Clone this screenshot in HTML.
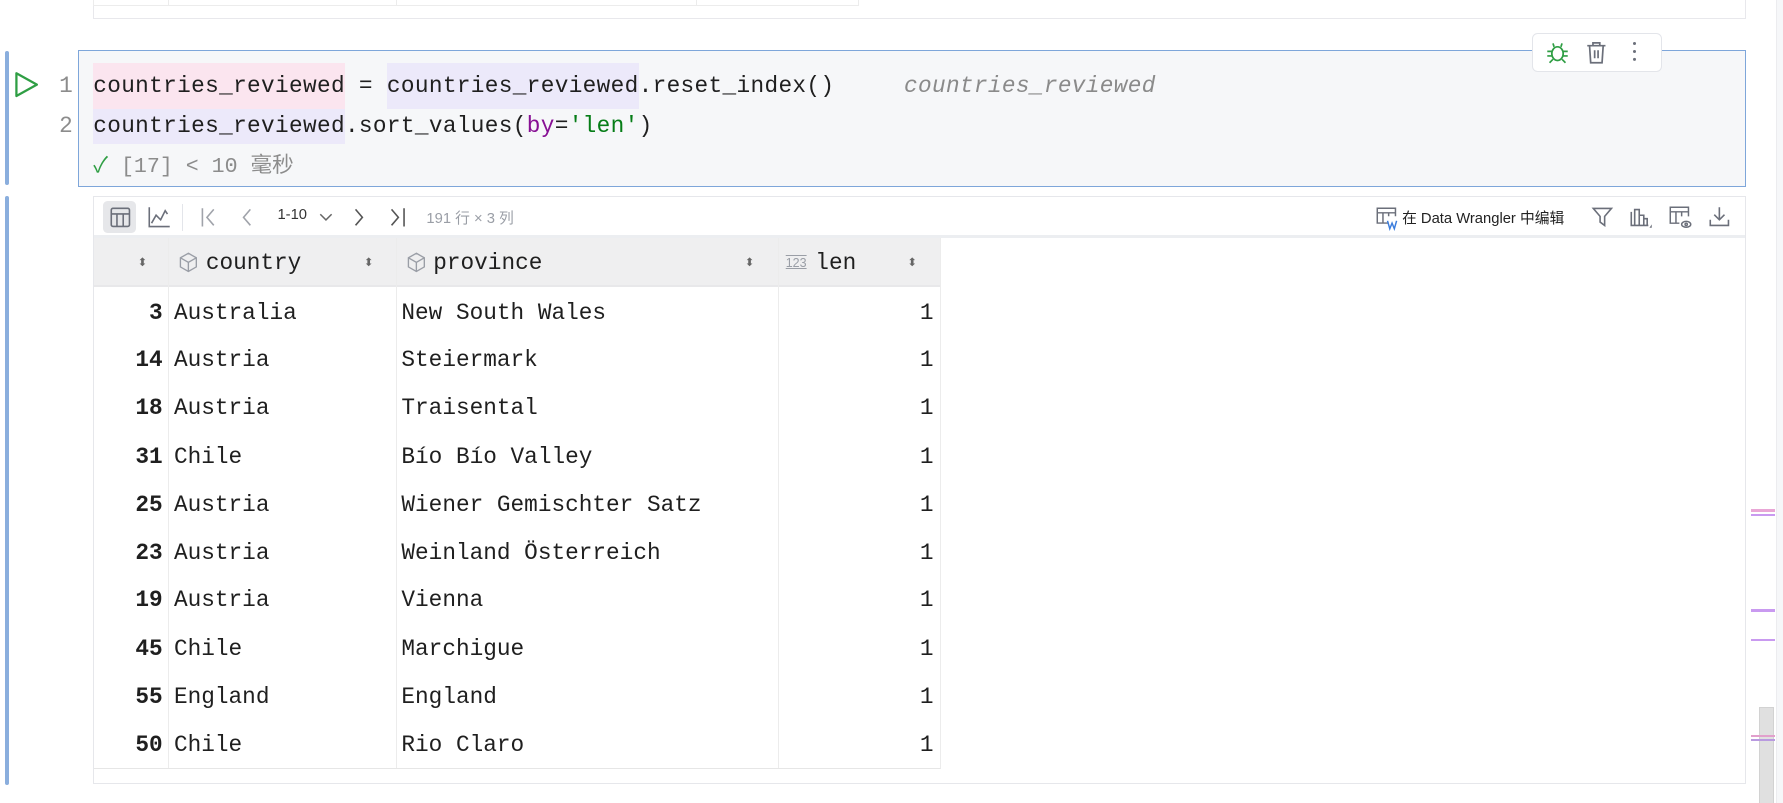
<!DOCTYPE html>
<html><head><meta charset="utf-8"><style>
html,body{margin:0;padding:0;background:#fff;overflow:hidden}
#w{position:relative;width:1568px;height:706px;zoom:1.13712;font-family:"Liberation Mono","Noto Sans CJK SC",monospace;color:#1f1f1f}
.a{position:absolute}
.code{font-size:20px;white-space:pre;line-height:30px}
.ui{font-family:"Liberation Sans","Noto Sans CJK SC",sans-serif}
.row{position:absolute;left:0;width:744px;height:42px;font-size:20px;line-height:44px}
.row span{position:absolute;top:0}
.vl{position:absolute;top:0;bottom:0;width:1px;background:#ececec}
svg{position:absolute}
</style></head><body><div id="w">
<div class="a" style="left:82px;top:-2px;width:1452px;height:18px;border:1px solid #e8e8ec;border-top:none"></div>
<div class="a" style="left:82px;top:-2px;width:672px;height:6px;border:1px solid #ececec;border-top:none"></div>
<div class="a" style="left:148px;top:0;width:1px;height:4px;background:#ececec"></div>
<div class="a" style="left:348px;top:0;width:1px;height:4px;background:#ececec"></div>
<div class="a" style="left:612px;top:0;width:1px;height:4px;background:#ececec"></div>

<div class="a" style="left:4px;top:45px;width:4px;height:118px;background:#8aaedd;border-radius:2px"></div>
<div class="a" style="left:4px;top:172px;width:4px;height:518px;background:#8aaedd;border-radius:2px"></div>
<svg style="left:11px;top:62px" width="24" height="24" viewBox="0 0 24 24"><path d="M3 2 L21 12 L3 22 Z" fill="none" stroke="#2f9e44" stroke-width="2" stroke-linejoin="round"/></svg>
<div class="a code" style="left:52px;top:61px;color:#8c8c8c">1</div>
<div class="a code" style="left:52px;top:96px;color:#8c8c8c">2</div>

<div class="a" style="left:69px;top:44px;width:1465px;height:119px;border:1px solid #7ea6da;background:#f6f7f9"></div>
<div class="a" style="left:82px;top:55px;width:221px;height:41px;background:#fbe5ef"></div>
<div class="a" style="left:340px;top:55px;width:222px;height:41px;background:#ece9fa"></div>
<div class="a" style="left:82px;top:96px;width:221px;height:31px;background:#ece9fa"></div>
<div class="a code" style="left:82px;top:61px;letter-spacing:0.3px">countries_reviewed = countries_reviewed.reset_index()</div>
<div class="a code" style="left:795px;top:61px;color:#8a8a8a;font-style:italic;letter-spacing:0.3px">countries_reviewed</div>
<div class="a code" style="left:82px;top:96px;letter-spacing:0.3px">countries_reviewed.sort_values(<span style="color:#871094">by</span>=<span style="color:#067d17">'len'</span>)</div>
<div class="a code" style="left:82px;top:132px;font-size:19px;color:#8c8c8c"><span style="color:#2f9e44">✓</span> [17] &lt; 10 毫秒</div>

<div class="a" style="left:1347px;top:29px;width:113px;height:33px;background:#fff;border:1px solid #e3e5ea;border-radius:5px"></div>
<svg style="left:1359px;top:35px" width="22" height="22" viewBox="0 0 22 22" fill="none" stroke="#2f9e44" stroke-width="1.5"><ellipse cx="11" cy="12" rx="5" ry="6"/><path d="M8 6 L7 3 M14 6 L15 3 M6 10 H2 M16 10 H20 M6 14 H2 M16 14 H20 M7 17 L4 20 M15 17 L18 20"/></svg>
<svg style="left:1394px;top:35px" width="20" height="22" viewBox="0 0 20 22" fill="none" stroke="#6b6f7a" stroke-width="1.5"><path d="M2 5 H18 M7 5 V2.5 H13 V5 M4 5 L5 20 H15 L16 5 M8.5 9 V16 M11.5 9 V16"/></svg>
<div class="a" style="left:1436px;top:37px;width:3px;height:3px;border-radius:2px;background:#6b6f7a;box-shadow:0 7px 0 #6b6f7a,0 14px 0 #6b6f7a"></div>

<div class="a" style="left:82px;top:172px;width:1452px;height:516px;border:1px solid #e6e7eb;background:#fff"></div>
<div class="a" style="left:83px;top:207px;width:1452px;height:2px;background:#eceef1"></div>
<div class="a" style="left:91px;top:177px;width:29px;height:28px;background:#e6e7ea;border-radius:4px"></div>
<svg style="left:96px;top:181px" width="20" height="20" viewBox="0 0 20 20" fill="none" stroke="#6b6f7a" stroke-width="1.4"><rect x="2" y="2" width="16" height="16" rx="1.5"/><path d="M2 7 H18 M7 7 V18 M12.5 7 V18"/></svg>
<svg style="left:129px;top:180px" width="22" height="22" viewBox="0 0 22 22" fill="none" stroke="#6b6f7a" stroke-width="1.4"><path d="M2 2 V19 H20 M4 16 L8 9 L12 13 L16 5 L18 8"/></svg>
<div class="a" style="left:160px;top:179px;width:1px;height:24px;background:#e3e5ea"></div>
<svg style="left:175px;top:181px" width="18" height="20" viewBox="0 0 18 20" fill="none" stroke="#a0a3aa" stroke-width="1.4"><path d="M3 2 V18 M13 3 L7 10 L13 17"/></svg>
<svg style="left:210px;top:181px" width="14" height="20" viewBox="0 0 14 20" fill="none" stroke="#a0a3aa" stroke-width="1.4"><path d="M10 3 L4 10 L10 17"/></svg>
<div class="a ui" style="left:244px;top:182px;font-size:13px;color:#333">1-10</div>
<svg style="left:280px;top:186px" width="14" height="10" viewBox="0 0 14 10" fill="none" stroke="#666" stroke-width="1.3"><path d="M2 2 L7 7 L12 2"/></svg>
<svg style="left:309px;top:181px" width="14" height="20" viewBox="0 0 14 20" fill="none" stroke="#555" stroke-width="1.4"><path d="M4 3 L10 10 L4 17"/></svg>
<svg style="left:340px;top:181px" width="18" height="20" viewBox="0 0 18 20" fill="none" stroke="#555" stroke-width="1.4"><path d="M4 3 L10 10 L4 17 M15 2 V18"/></svg>
<div class="a ui" style="left:375px;top:182px;font-size:13px;color:#9a9ea6">191 行 × 3 列</div>

<svg style="left:1209px;top:181px" width="22" height="22" viewBox="0 0 22 22" fill="none" stroke="#6b6f7a" stroke-width="1.3"><path d="M12 15 H2 V2 H18 V9 M2 6 H18 M7 6 V15 M12 6 V9"/><path d="M11 13 L13 20 L15 15 L17 20 L19 13" stroke="#3b7ddd"/></svg>
<div class="a ui" style="left:1233px;top:182px;font-size:13px;color:#222">在 Data Wrangler 中编辑</div>
<svg style="left:1399px;top:180px" width="20" height="20" viewBox="0 0 20 20" fill="none" stroke="#6b6f7a" stroke-width="1.4"><path d="M2 3 H18 L12 10 V18 L8 15 V10 Z"/></svg>
<svg style="left:1433px;top:180px" width="22" height="22" viewBox="0 0 22 22" fill="none" stroke="#6b6f7a" stroke-width="1.4"><path d="M2 6 V18 H17 M5 18 V4 H9 V18 M9 9 H13 V18 M13 12 H16 V18"/><path d="M18 20 L20 17 V20 Z" fill="#6b6f7a" stroke="none"/></svg>
<svg style="left:1467px;top:180px" width="22" height="22" viewBox="0 0 22 22" fill="none" stroke="#6b6f7a" stroke-width="1.3"><path d="M10 16 H2 V2 H18 V10 M2 6 H18 M7 6 V16 M12 6 V10"/><ellipse cx="16" cy="17" rx="4" ry="2.6"/><circle cx="16" cy="17" r="1"/></svg>
<svg style="left:1502px;top:180px" width="20" height="20" viewBox="0 0 20 20" fill="none" stroke="#6b6f7a" stroke-width="1.4"><path d="M10 2 V13 M5.5 8.5 L10 13 L14.5 8.5 M2 13 V18 H18 V13"/></svg>

<div class="a" style="left:83px;top:209px;width:744px;height:466px;border-right:1px solid #ececec;border-bottom:1px solid #e6e6e6">
  <div class="a" style="left:0;top:0;width:744px;height:42px;background:#efeff0;border-bottom:2px solid #e8e8ea"></div>
  <div class="vl" style="left:65px"></div><div class="vl" style="left:265px"></div><div class="vl" style="left:601px"></div>
  <div class="row" style="top:0">
    <span class="ui" style="left:38px;font-size:10px;color:#666">⬍</span>
    <svg style="left:73px;top:12px" width="20" height="20" viewBox="0 0 20 20" fill="none" stroke="#9a9ea6" stroke-width="1.2"><path d="M10 2 L17 6 V14 L10 18 L3 14 V6 Z M3 6 L10 10 L17 6 M10 10 V18"/></svg>
    <span style="left:98px">country</span>
    <span class="ui" style="left:237px;font-size:10px;color:#666">⬍</span>
    <svg style="left:273px;top:12px" width="20" height="20" viewBox="0 0 20 20" fill="none" stroke="#9a9ea6" stroke-width="1.2"><path d="M10 2 L17 6 V14 L10 18 L3 14 V6 Z M3 6 L10 10 L17 6 M10 10 V18"/></svg>
    <span style="left:298px">province</span>
    <span class="ui" style="left:572px;font-size:10px;color:#666">⬍</span>
    <span class="ui" style="left:608px;font-size:11px;color:#9a9ea6;text-decoration:underline overline">123</span>
    <span style="left:634px">len</span>
    <span class="ui" style="left:715px;font-size:10px;color:#666">⬍</span>
  </div>
</div>
<div class="a" style="left:83px;top:253px">
<div class="row" style="top:0"><span style="right:684px;font-weight:bold">3</span><span style="left:70px">Australia</span><span style="left:270px">New South Wales</span><span style="right:6px">1</span></div>
<div class="row" style="top:42px"><span style="right:684px;font-weight:bold">14</span><span style="left:70px">Austria</span><span style="left:270px">Steiermark</span><span style="right:6px">1</span></div>
<div class="row" style="top:84px"><span style="right:684px;font-weight:bold">18</span><span style="left:70px">Austria</span><span style="left:270px">Traisental</span><span style="right:6px">1</span></div>
<div class="row" style="top:127px"><span style="right:684px;font-weight:bold">31</span><span style="left:70px">Chile</span><span style="left:270px">Bío Bío Valley</span><span style="right:6px">1</span></div>
<div class="row" style="top:169px"><span style="right:684px;font-weight:bold">25</span><span style="left:70px">Austria</span><span style="left:270px">Wiener Gemischter Satz</span><span style="right:6px">1</span></div>
<div class="row" style="top:211px"><span style="right:684px;font-weight:bold">23</span><span style="left:70px">Austria</span><span style="left:270px">Weinland Österreich</span><span style="right:6px">1</span></div>
<div class="row" style="top:253px"><span style="right:684px;font-weight:bold">19</span><span style="left:70px">Austria</span><span style="left:270px">Vienna</span><span style="right:6px">1</span></div>
<div class="row" style="top:296px"><span style="right:684px;font-weight:bold">45</span><span style="left:70px">Chile</span><span style="left:270px">Marchigue</span><span style="right:6px">1</span></div>
<div class="row" style="top:338px"><span style="right:684px;font-weight:bold">55</span><span style="left:70px">England</span><span style="left:270px">England</span><span style="right:6px">1</span></div>
<div class="row" style="top:380px"><span style="right:684px;font-weight:bold">50</span><span style="left:70px">Chile</span><span style="left:270px">Rio Claro</span><span style="right:6px">1</span></div>
</div>

<div class="a" style="left:1562px;top:0;width:6px;height:706px;background:#f6f7f9;border-left:1px solid #ececef"></div>
<div class="a" style="left:1547px;top:622px;width:11px;height:84px;background:#e0e0e0;border:1px solid #d2d2d2"></div>
<div class="a" style="left:1540px;top:448px;width:21px;height:2px;background:#e9a6d6"></div>
<div class="a" style="left:1540px;top:452px;width:21px;height:2px;background:#c99af0"></div>
<div class="a" style="left:1540px;top:536px;width:21px;height:2px;background:#c99af0"></div>
<div class="a" style="left:1540px;top:562px;width:21px;height:2px;background:#c99af0"></div>
<div class="a" style="left:1540px;top:646px;width:21px;height:2px;background:#e2a0cc"></div>
<div class="a" style="left:1540px;top:650px;width:21px;height:2px;background:#b99ae0"></div>
</div></body></html>
